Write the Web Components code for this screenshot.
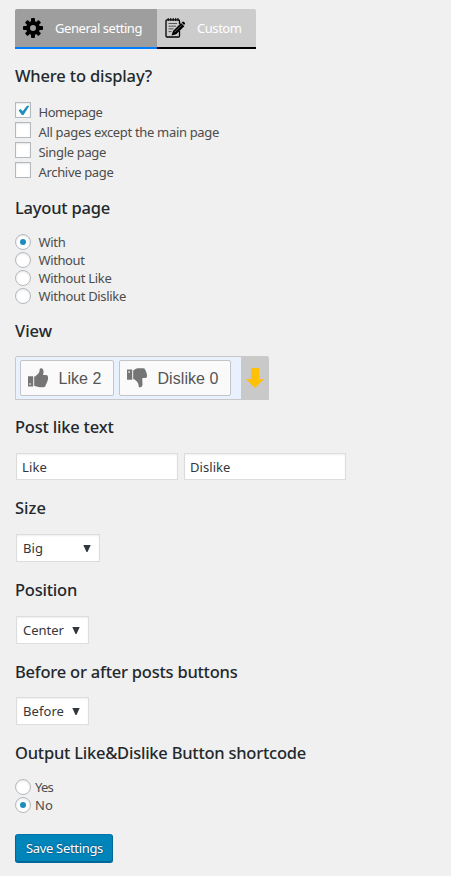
<!DOCTYPE html>
<html lang="en"><head><meta charset="utf-8"><title>Like settings</title>
<style>
html,body{margin:0;background:#f0f0f0}
body{font:13px/18px "Noto Sans","Open Sans",sans-serif;color:#4c4c4c}
</style></head><body>
<settings-page></settings-page>
<script>
const define=(name,html,setup)=>customElements.define(name,class extends HTMLElement{
  connectedCallback(){
    if(this.shadowRoot)return;
    const t=document.createElement('template');
    t.innerHTML=typeof html==='function'?html(this):html;
    this.attachShadow({mode:'open'}).append(t.content.cloneNode(true));
    if(setup)setup(this);
  }
});

/* A single line of text tracked to a given width. */
define('fit-text','<style>:host{display:inline-block;white-space:nowrap}span{display:inline-block}</style><span><slot></slot></span>',el=>{
  const s=el.shadowRoot.querySelector('span'),n=el.textContent.length;
  const w=+el.getAttribute('w');
  s.style.letterSpacing=((w-s.getBoundingClientRect().width)/n)+'px';
});

define('setting-group',el=>`<style>
:host{display:block;height:${el.getAttribute('h')}px}
h3{margin:0 0 ${el.getAttribute('gap')||16}px;font-size:16.5px;line-height:20px;font-weight:500;color:#23282d}
</style><h3><fit-text w="${el.getAttribute('w')}">${el.getAttribute('label').replace('&','&amp;')}</fit-text></h3><slot></slot>`);

define('check-row',el=>`<style>
:host{display:flex;height:20px;gap:7.5px}
i{box-sizing:border-box;width:16px;height:16px;background:#fff;border:1px solid #b4b9be;box-shadow:inset 0 1px 2px rgba(0,0,0,.1)}
svg{display:block}span{padding-top:1px}
</style><i>${el.hasAttribute('on')?'<svg width="14" height="14" viewBox="0 0 14 14"><path d="M2.5 7.2 4.8 6l1.8 2.3L11 2.7h2.4L7.5 12H5.8z" fill="#1e8cbe"/></svg>':''}</i><span><slot></slot></span>`);

define('radio-row',el=>`<style>
:host{display:flex;height:18px;gap:${el.getAttribute('gap')||7.5}px}
i{box-sizing:border-box;width:16px;height:16px;background:#fff;border:1px solid #b4b9be;border-radius:50%;box-shadow:inset 0 1px 2px rgba(0,0,0,.1);display:grid;place-items:center}
b{width:6px;height:6px;border-radius:50%;background:#1e8cbe}span{margin-top:-1px}
</style><i>${el.hasAttribute('on')?'<b></b>':''}</i><span><slot></slot></span>`);

define('text-box',`<style>:host{box-sizing:border-box;display:block;width:162px;height:27px;padding:4px 5px 0;background:#fff;border:1px solid #ddd;box-shadow:inset 0 1px 2px rgba(0,0,0,.07);color:#32373c}</style><slot></slot>`);

define('select-box',el=>`<style>:host{box-sizing:border-box;display:flex;justify-content:space-between;width:${el.getAttribute('width')}px;height:28px;margin-left:1px;padding:4px 8px 0 6px;background:#fff;border:1px solid #ddd;box-shadow:inset 0 1px 2px rgba(0,0,0,.07);color:#32373c}svg{margin-top:6px}</style><slot></slot><svg width="8" height="8"><path d="M.3 0h7.4L4.5 7h-1z" fill="#32373c"/></svg>`);

define('tab-item',el=>`<style>
:host{box-sizing:border-box;display:flex;align-items:center;height:40px;color:#fff;background:#ccc;border-bottom:2px solid #000;border-radius:0 2px 0 0;width:99px;padding-left:8px;gap:12px}
:host([active]){background:#9e9e9e;border-color:#007cff;border-radius:2px 0 0 0;width:142px}
div{padding-bottom:1px}</style><slot name="icon"></slot><div><slot></slot></div>`);

define('gear-icon',`<style>:host,svg{display:block}</style><svg width="20" height="20" viewBox="0 0 20 20"><g fill="#000"><rect x="8" width="4" height="20" rx="1"/><rect y="8" width="20" height="4" rx="1"/><g transform="rotate(45 10 10)"><rect x="8" y=".4" width="4" height="19.2" rx="1"/><rect x=".4" y="8" width="19.2" height="4" rx="1"/></g><circle cx="10" cy="10" r="6.9"/></g><circle cx="10" cy="10" r="3" fill="#9e9e9e"/></svg>`);

define('note-icon',`<style>:host,svg{display:block}</style><svg width="20" height="20" viewBox="0 0 20 20"><path d="M14.5 6V2.8Q14.5 1.8 13.5 1.8H2Q1 1.8 1 2.8V18Q1 19 2 19H13.5Q14.5 19 14.5 18V13" fill="none" stroke="#000" stroke-width="1.3"/><path d="M3.2 0v3M5.7 0v3M8.2 0v3M10.7 0v3M13 0v3" stroke="#111" stroke-width="1.1"/><path d="M3.5 5.5h8.5M3.5 8.2h7.5M3.5 10.9h5M3.5 13.6h3" stroke="#555" stroke-width="1"/><path d="M6.5 17.5 8 13 16 5l3.3 3.2-8.1 8z" fill="#000"/><path d="m16.6 4.5 1-.8q.8-.4 1.4.3l.8.8q.5.7 0 1.3l-.7 1z"/><path d="m9.5 14.2 6.8-6.8" stroke="#777" stroke-width=".8"/></svg>`);

define('thumb-icon',el=>`<style>:host,svg{display:block}</style><svg width="20" height="20" viewBox="0 0 20 20" fill="#757575">${el.hasAttribute('down')
?'<path fill-rule="evenodd" d="M0 1.6h5.2v10.2H0zM1.4 3.2v1.5h1.4V3.2z"/><path d="M6.2 2.4C8 1.7 9 .5 11 .3h5.4q1.7 0 1.8 1.6 1 .8.8 2 .9 1 .7 2.2.7 1.1.3 2.4-.2 1.5-1.9 1.6h-2.6c-.5 2 0 3.5 0 6.2 0 1.8-.7 3-2.7 3.2l-1-.4-.5-3.2c-.8-2.3-3-3.6-4.1-4.6H6.2z"/>'
:'<path fill-rule="evenodd" d="M0 8.3h5.2v10.2H0zM1.4 15.2v1.6h1.4v-1.6z"/><path d="M6.2 8.5h1c1.1-1.3 3.3-2.8 4.1-4.6l.5-3.2 1-.5c2 .2 2.7 1.5 2.7 3.2 0 2.2-.5 3.2-.5 3.7h3.1c1.7.1 2.1 1.8 1.9 3.3q.1 1.4-.5 2 .1 1.5-.8 2.2.1 1.3-.8 1.9 0 2.6-2.5 2.7H12c-2.3 0-4.1-1-5.8-1.4z"/>'}</svg>`);

define('vote-button',el=>`<style>:host{box-sizing:border-box;display:flex;align-items:center;gap:10.5px;width:${el.getAttribute('width')}px;height:36px;padding-left:7px;border:1px solid #c3c3c8;border-radius:2px;background:#fafafa;color:#555;font:16px/20px "Liberation Sans",Arial,sans-serif}div{padding-top:1px}</style><thumb-icon ${el.hasAttribute('down')?'down':''}></thumb-icon><div><slot></slot></div>`);

define('vote-preview',`<style>
:host{box-sizing:border-box;display:flex;width:254px;height:44px;border:1px solid #c9c9c9;border-radius:2px 2px 0 0;background:#e9f1ff;padding:3px 0 0 4px;gap:5px}
aside{margin:-3px 0 0 auto;width:27px;height:42px;background:#c9c9c9;display:grid;place-items:center}
svg{display:block}</style>
<vote-button width="94"><fit-text w="43">Like 2</fit-text></vote-button><vote-button down width="112"><fit-text w="61">Dislike 0</fit-text></vote-button>
<aside><svg width="18" height="20"><path d="M5 0h8v11h5L9 20 0 11h5z" fill="#ffc107"/></svg></aside>`);

define('save-button',`<style>
:host{box-sizing:border-box;display:block;width:98px;height:29px;padding:4px 0 0 10px;background:#0085ba;border:1px solid;border-color:#0073aa #006799 #006799;border-radius:3px;box-shadow:inset 0 -1px 0 #006799;color:#fff;text-shadow:0 -1px 1px #006799,1px 0 1px #006799,0 1px 1px #006799}</style><slot></slot>`);

define('settings-page',`<style>
:host{display:block;box-sizing:border-box;width:451px;height:876px;padding:9px 15px 0;overflow:hidden;background:#f0f0f0}
nav{display:flex;margin-bottom:17px}.pair{display:flex;gap:6px;padding-left:1px}
</style>
<nav><tab-item active><gear-icon slot="icon"></gear-icon><fit-text w="87">General setting</fit-text></tab-item><tab-item><note-icon slot="icon"></note-icon><fit-text w="44.5">Custom</fit-text></tab-item></nav>
<setting-group h="132" w="137" label="Where to display?"><check-row on><fit-text w="64">Homepage</fit-text></check-row><check-row><fit-text w="180.5">All pages except the main page</fit-text></check-row><check-row><fit-text w="67.5">Single page</fit-text></check-row><check-row><fit-text w="75">Archive page</fit-text></check-row></setting-group>
<setting-group h="123" w="95" label="Layout page"><radio-row on><fit-text w="27">With</fit-text></radio-row><radio-row><fit-text w="46">Without</fit-text></radio-row><radio-row><fit-text w="73">Without Like</fit-text></radio-row><radio-row><fit-text w="87.5">Without Dislike</fit-text></radio-row></setting-group>
<setting-group h="96" w="37" gap="15" label="View"><vote-preview></vote-preview></setting-group>
<setting-group h="81" w="98.5" label="Post like text"><div class="pair"><text-box><fit-text w="25">Like</fit-text></text-box><text-box><fit-text w="40.5">Dislike</fit-text></text-box></div></setting-group>
<setting-group h="82" w="31" label="Size"><select-box width="84"><fit-text w="20">Big</fit-text></select-box></setting-group>
<setting-group h="82" w="62" label="Position"><select-box width="73"><fit-text w="41">Center</fit-text></select-box></setting-group>
<setting-group h="81" w="222.5" gap="15" label="Before or after posts buttons"><select-box width="73"><fit-text w="41">Before</fit-text></select-box></setting-group>
<setting-group h="91" w="291" label="Output Like&amp;Dislike Button shortcode"><radio-row gap="4"><fit-text w="18">Yes</fit-text></radio-row><radio-row gap="4" on><fit-text w="18">No</fit-text></radio-row></setting-group>
<save-button><fit-text w="77">Save Settings</fit-text></save-button>`);
</script></body></html>
